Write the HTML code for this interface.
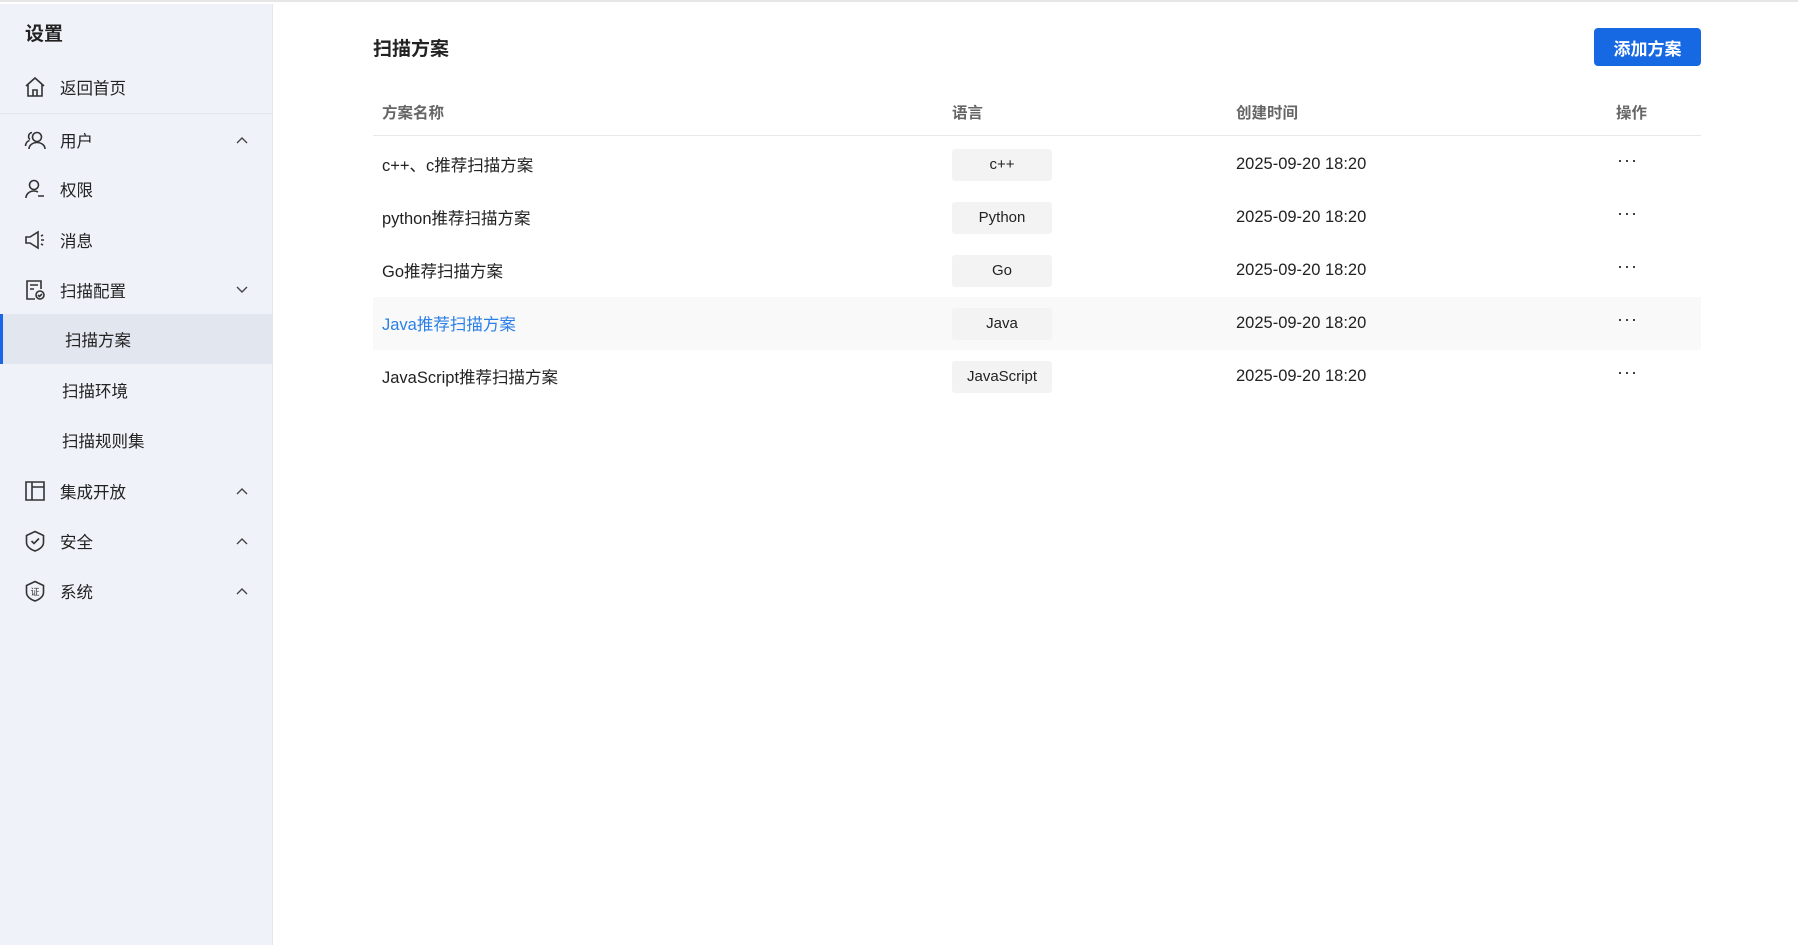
<!DOCTYPE html>
<html><head><meta charset="utf-8"><style>
*{margin:0;padding:0;box-sizing:border-box}
body{width:1798px;height:943px;overflow:hidden;background:#fff;font-family:"Liberation Sans","Noto Sans CJK SC",sans-serif;color:#222;position:relative;border-top:2px solid #e6e6e6}
.side{position:absolute;left:0;top:2px;width:273px;height:941px;background:#eff2f9;border-right:1px solid #e5e7ec}
.side .t{position:absolute;left:25px;top:15px;font-size:19px;font-weight:bold;color:#222}
.it{position:absolute;left:0;width:273px;height:50px;display:flex;align-items:center;font-size:16.5px;color:#222}
.it svg.i{position:absolute;left:24px;width:22px;height:22px}
.it .l{position:absolute;left:60px}
.it .c{position:absolute;left:236px;width:12px;height:8px}
.div{position:absolute;left:0;top:109px;width:273px;height:1px;background:#e2e5ec}
.sel{background:#e2e6ee}
.sel:before{content:"";position:absolute;left:0;top:0;width:3px;height:100%;background:#1a66e8}
.main .h{position:absolute;left:373px;top:32px;font-size:19px;font-weight:bold}
.btn{position:absolute;left:1594px;top:26px;width:107px;height:38px;background:#1668e3;color:#fff;border-radius:4px;font-size:17px;font-weight:bold;display:flex;align-items:center;justify-content:center}
.th{position:absolute;top:99px;font-size:15.5px;color:#666;font-weight:bold}
.hl{position:absolute;left:373px;top:133px;width:1328px;height:1px;background:#e8e8e8}
.row{position:absolute;left:373px;width:1328px;height:53px;font-size:16.5px}
.row span{position:absolute;top:50%;transform:translateY(-50%);line-height:1.2}
.row span.n{margin-top:2px}
.tag{left:579px;width:100px;height:32px;background:#f3f3f3;border-radius:3px;font-size:15px;display:flex;align-items:center;justify-content:center}
.dots{left:1244px;font-size:18px;letter-spacing:1px;margin-top:-4px}
</style></head><body>
<div class="side">
<div class="t">设置</div>
<div class="it" style="top:58px"><svg class="i" viewBox="0 0 22 22" fill="none" stroke="#333" stroke-width="1.6"><path d="M2 10L11 2l9 8M4 8v12h14V8M9 20v-6h4v6"/></svg><span class="l">返回首页</span></div>
<div class="div"></div>
<div class="it" style="top:111px"><svg class="i" viewBox="0 0 22 22" fill="none" stroke="#333" stroke-width="1.6"><circle cx="13" cy="8" r="4.5"/><path d="M5 20c0-4 4-6.5 8-6.5s8 2.5 8 6.5M8 3.5a4 4 0 0 0-2 7M1.5 17c0-3 2-5 4-5.5"/></svg><span class="l">用户</span><svg class="c" viewBox="0 0 12 8" fill="none" stroke="#444" stroke-width="1.4"><path d="M1 7l5-5 5 5"/></svg></div>
<div class="it" style="top:160px"><svg class="i" viewBox="0 0 22 22" fill="none" stroke="#333" stroke-width="1.6"><circle cx="10" cy="7" r="4.5"/><path d="M2 20c0-4 3.5-7 8-7 2 0 3 .5 4 1M14 18h6"/></svg><span class="l">权限</span></div>
<div class="it" style="top:211px"><svg class="i" viewBox="0 0 22 22" fill="none" stroke="#333" stroke-width="1.6"><path d="M2 8h4l8-5v16l-8-5H2zM17 7l2-1M17 11h3M17 15l2 1"/></svg><span class="l">消息</span></div>
<div class="it" style="top:261px"><svg class="i" viewBox="0 0 22 22" fill="none" stroke="#333" stroke-width="1.6"><path d="M11 20H3V2h14v8M6 6h8M6 10h4"/><circle cx="16" cy="16" r="4"/><path d="M14 16l1.5 1.5L18 15"/></svg><span class="l">扫描配置</span><svg class="c" viewBox="0 0 12 8" fill="none" stroke="#444" stroke-width="1.4"><path d="M1 1l5 5 5-5"/></svg></div>
<div class="it sel" style="top:310px"><span class="l" style="left:65px">扫描方案</span></div>
<div class="it" style="top:361px"><span class="l" style="left:62px">扫描环境</span></div>
<div class="it" style="top:411px"><span class="l" style="left:62px">扫描规则集</span></div>
<div class="it" style="top:462px"><svg class="i" viewBox="0 0 22 22" fill="none" stroke="#333" stroke-width="1.6"><path d="M2 2h18v18H2zM8 2v18M8 7h12"/></svg><span class="l">集成开放</span><svg class="c" viewBox="0 0 12 8" fill="none" stroke="#444" stroke-width="1.4"><path d="M1 7l5-5 5 5"/></svg></div>
<div class="it" style="top:512px"><svg class="i" viewBox="0 0 22 22" fill="none" stroke="#333" stroke-width="1.6"><path d="M11 1.5l8.5 4v7c0 4-4 7-8.5 8.5C6.5 19.5 2.5 16.5 2.5 12.5v-7z"/><path d="M7.5 11l2.5 2.5 5-5"/></svg><span class="l">安全</span><svg class="c" viewBox="0 0 12 8" fill="none" stroke="#444" stroke-width="1.4"><path d="M1 7l5-5 5 5"/></svg></div>
<div class="it" style="top:562px"><svg class="i" viewBox="0 0 22 22" fill="none" stroke="#333" stroke-width="1.6"><path d="M11 1.5l8.5 4v7c0 4-4 7-8.5 8.5C6.5 19.5 2.5 16.5 2.5 12.5v-7z"/><text x="11" y="15" font-size="9" text-anchor="middle" fill="#333" stroke="none" font-family="Noto Sans CJK SC">证</text></svg><span class="l">系统</span><svg class="c" viewBox="0 0 12 8" fill="none" stroke="#444" stroke-width="1.4"><path d="M1 7l5-5 5 5"/></svg></div>
</div>
<div class="main">
<div class="h">扫描方案</div>
<div class="btn">添加方案</div>
<div class="th" style="left:382px">方案名称</div>
<div class="th" style="left:952px">语言</div>
<div class="th" style="left:1236px">创建时间</div>
<div class="th" style="left:1616px">操作</div>
<div class="hl"></div>
<div class="row" style="top:136px"><span class="n" style="left:9px">c++、c推荐扫描方案</span><span class="tag">c++</span><span style="left:863px">2025-09-20 18:20</span><span class="dots">···</span></div>
<div class="row" style="top:189px"><span class="n" style="left:9px">python推荐扫描方案</span><span class="tag">Python</span><span style="left:863px">2025-09-20 18:20</span><span class="dots">···</span></div>
<div class="row" style="top:242px"><span class="n" style="left:9px">Go推荐扫描方案</span><span class="tag">Go</span><span style="left:863px">2025-09-20 18:20</span><span class="dots">···</span></div>
<div class="row" style="top:295px;background:#f9f9f9"><span class="n" style="left:9px;color:#2a7fe8">Java推荐扫描方案</span><span class="tag">Java</span><span style="left:863px">2025-09-20 18:20</span><span class="dots">···</span></div>
<div class="row" style="top:348px"><span class="n" style="left:9px">JavaScript推荐扫描方案</span><span class="tag">JavaScript</span><span style="left:863px">2025-09-20 18:20</span><span class="dots">···</span></div>
</div>
</body></html>
